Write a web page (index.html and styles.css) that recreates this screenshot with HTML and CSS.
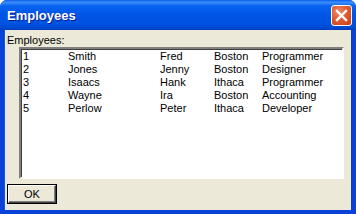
FILE: index.html
```html
<!DOCTYPE html>
<html lang="en">
<head>
    <meta charset="UTF-8">
    <title>Employees</title>
    <link rel="stylesheet" href="styles.css">
</head>
<body>
    <div class="window">
        <div class="titlebar">
            <span class="title">Employees</span>
            <button class="close-btn" aria-label="Close">
                <svg width="13" height="13" viewBox="0 0 13 13">
                    <path d="M2 2 L11 11 M11 2 L2 11" stroke="#fff" stroke-width="2.4" stroke-linecap="square"/>
                </svg>
            </button>
        </div>
        <div class="client">
            <label class="list-label" for="employeeList">Employees:</label>
            <div class="listbox" id="employeeList"></div>
            <div class="actions">
                <button class="ok-btn">OK</button>
            </div>
        </div>
    </div>

    <script>
        const employees = [
            [1, 'Smith', 'Fred', 'Boston', 'Programmer'],
            [2, 'Jones', 'Jenny', 'Boston', 'Designer'],
            [3, 'Isaacs', 'Hank', 'Ithaca', 'Programmer'],
            [4, 'Wayne', 'Ira', 'Boston', 'Accounting'],
            [5, 'Perlow', 'Peter', 'Ithaca', 'Developer']
        ];

        const list = document.getElementById('employeeList');
        employees.forEach(emp => {
            const row = document.createElement('div');
            row.className = 'row';
            row.innerHTML = emp.map(v => `<span>${v}</span>`).join('');
            list.appendChild(row);
        });
    </script>
</body>
</html>
```

FILE: styles.css
```css
body {
    margin: 0;
    background: #fff;
    font-family: 'Liberation Sans', Arial, sans-serif;
}
.window {
    width: 356px;
    height: 214px;
    display: flex;
    flex-direction: column;
    background: #0842d8;
    border-radius: 7px 7px 0 0;
    overflow: hidden;
}
.titlebar {
    height: 30px;
    flex-shrink: 0;
    display: flex;
    align-items: center;
    justify-content: space-between;
    padding: 0 4px 0 7px;
    background: linear-gradient(to bottom, #0a5df0 0%, #3d8ef8 8%, #0663f2 20%, #0055e5 50%, #0053e1 80%, #0046cc 95%, #003bb5 100%);
}
.title {
    color: #fff;
    font-weight: bold;
    font-size: 13px;
    text-shadow: 1px 1px 0 #0a1e8a;
    margin-top: 1px;
}
.close-btn {
    width: 21px;
    height: 21px;
    padding: 0;
    border: 1px solid #fff;
    border-radius: 3px;
    background: radial-gradient(circle at 35% 30%, #f08a6a 0%, #e15a32 45%, #c8401c 100%);
    display: flex;
    align-items: center;
    justify-content: center;
    margin-top: 1px;
}
.client {
    flex: 1;
    margin: 0 4px 4px 4px;
    background: #ece9d8;
    border-left: 1px solid #0c5ae8;
    border-right: 1px solid #0a3fc6;
    padding: 4px 0 0 2px;
    display: flex;
    flex-direction: column;
    font-size: 11px;
    color: #000;
}
.list-label {
    line-height: 12px;
    height: 13px;
}
.listbox {
    margin: 0 0 0 12px;
    width: 319px;
    height: 127px;
    background: #fff;
    border-style: solid;
    border-width: 2px;
    border-color: #808080 #ffffff #ffffff #808080;
    box-shadow: inset 1px 1px 0 #404040;
    padding: 1px 0 0 2px;
    box-sizing: content-box;
}
.row {
    display: grid;
    grid-template-columns: 45px 92px 54px 48px auto;
    height: 13px;
    line-height: 13px;
}
.actions {
    padding: 6px 0 0 1px;
}
.ok-btn {
    width: 48px;
    height: 18px;
    padding: 0;
    font-family: 'Liberation Sans', Arial, sans-serif;
    font-size: 11px;
    color: #000;
    background: #ece9d8;
    border-style: solid;
    border-width: 1px;
    border-color: #fff #404040 #404040 #fff;
    box-shadow: inset -1px -1px 0 #808080, 0 0 0 1px #000;
}
```
